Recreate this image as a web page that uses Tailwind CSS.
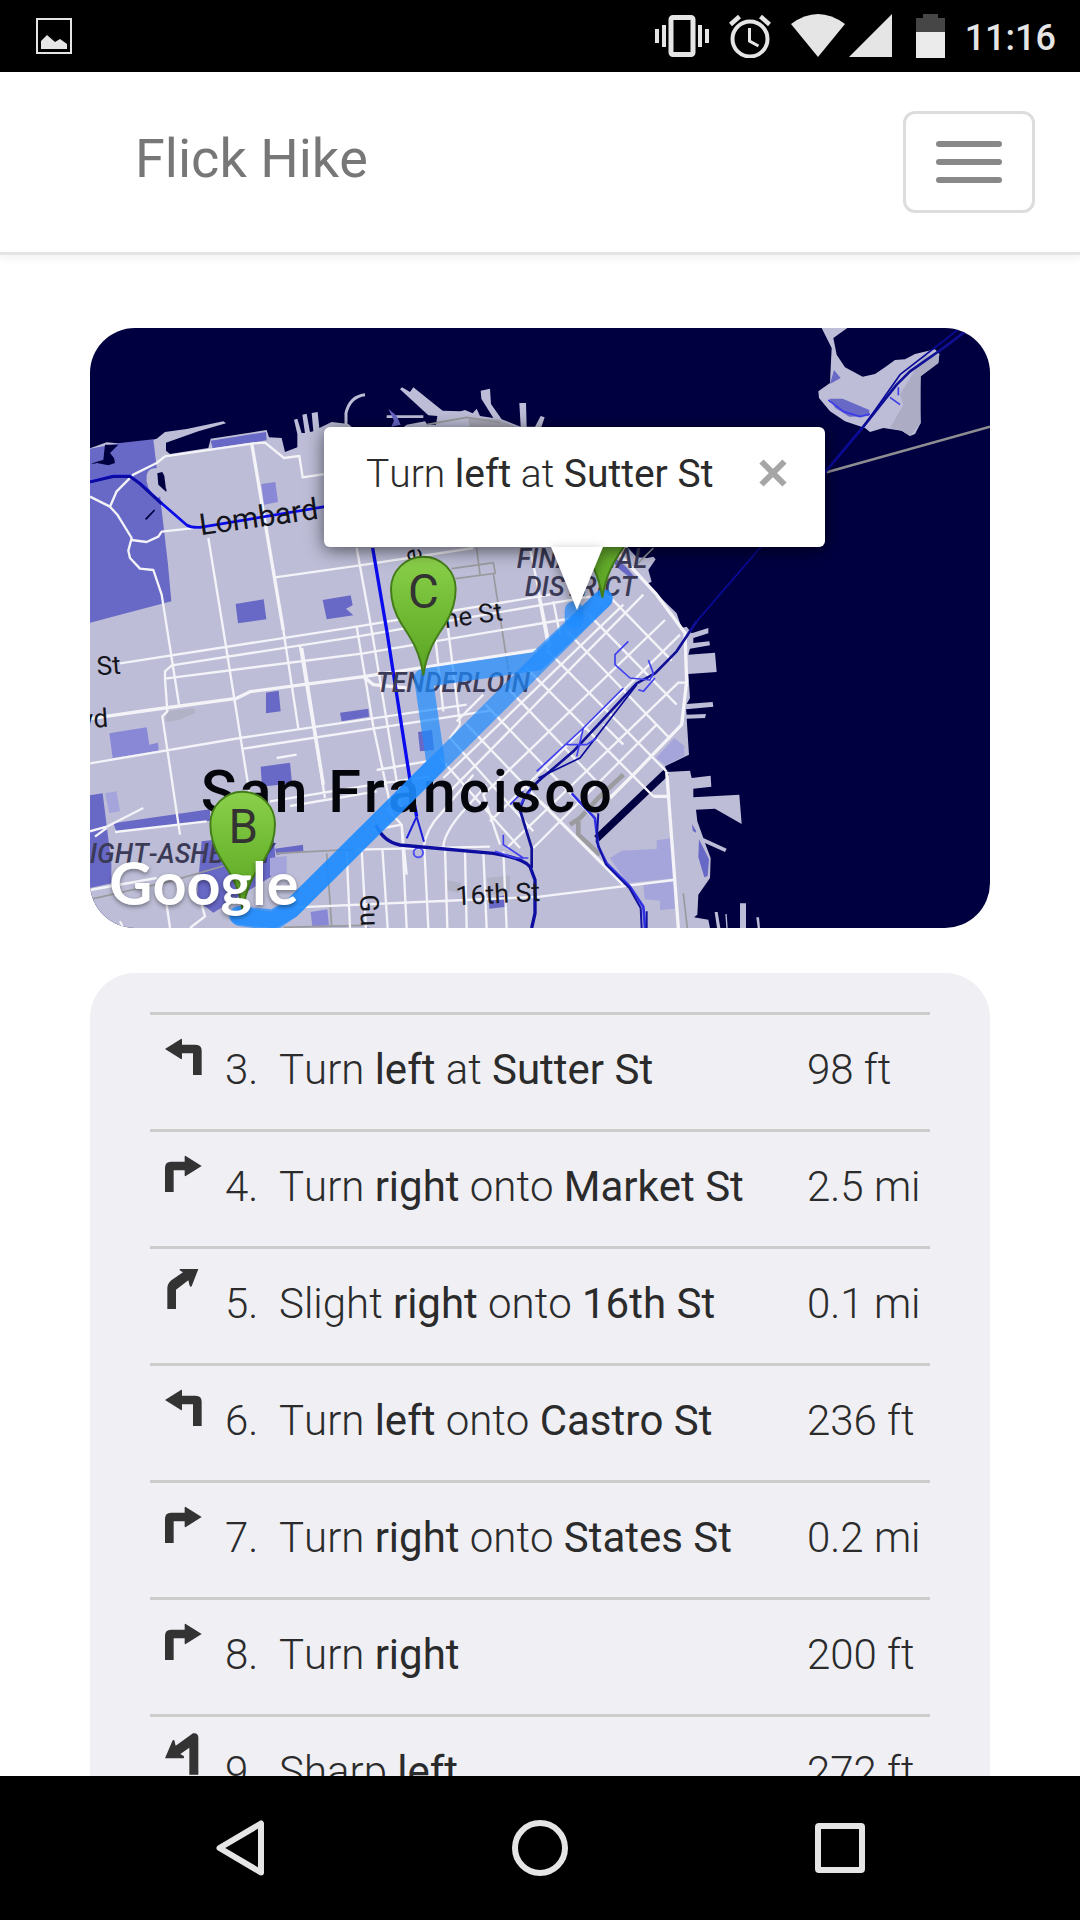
<!DOCTYPE html>
<html lang="en">
<head>
<meta charset="utf-8">
<meta name="viewport" content="width=device-width, initial-scale=1">
<title>Flick Hike</title>
<script src="https://cdn.jsdelivr.net/npm/@tailwindcss/browser@4"></script>
</head>
<body class="flex h-screen flex-col overflow-hidden bg-white font-[Roboto,sans-serif] text-[#2b2b2b] [font-kerning:none]">

<!-- Status bar -->
<div class="flex h-[72px] shrink-0 items-center justify-between bg-black pr-6 pl-9">
  <svg class="h-9 w-9" viewBox="0 0 36 36" role="img" aria-label="Screenshot saved"><rect x="1" y="1" width="34" height="34" fill="none" stroke="#e5e5e5" stroke-width="2"/><path d="M5 31V23l6-6 8 7 5-3 7 5v5z" fill="#e5e5e5"/></svg>
  <div class="flex items-center text-[#e5e5e5]">
    <svg class="mr-5 h-11 w-[54px]" viewBox="0 0 54 44" fill="#e5e5e5" role="img" aria-label="Vibrate"><rect x="16" y="3.500" width="22" height="37" rx="2" fill="none" stroke="#e5e5e5" stroke-width="5"/><path d="M0 15h4v14H0zM7 11h4v22H7zM43 11h4v22h-4zM50 15h4v14h-4z"/></svg>
    <svg class="mr-5 h-11 w-[42px]" viewBox="0 0 42 44" fill="none" stroke="#e5e5e5" role="img" aria-label="Alarm"><circle cx="21" cy="25" r="17.500" stroke-width="4"/><path d="M20.500 14v13l9 5" stroke-width="3"/><path d="M1.500 10.500l9-8M40.500 10.500l-9-8" stroke-width="4.500"/></svg>
    <svg class="mr-1 h-11 w-[54px]" viewBox="0 0 54 44" fill="#e5e5e5" role="img" aria-label="Wi-Fi"><path d="M27 43L0 10Q27-10 54 10z"/></svg>
    <svg class="mr-6 h-11 w-[43px]" viewBox="0 0 43 44" fill="#e5e5e5" role="img" aria-label="Signal"><path d="M0 43L43 0v43z"/></svg>
    <svg class="mr-5 h-11 w-[29px]" viewBox="0 0 29 44" role="img" aria-label="Battery"><path d="M7 0h15v4h7v15H0V4h7z" fill="#464646"/><path d="M0 18h29v26H0z" fill="#ebebeb"/></svg>
    <time class="pt-1 text-4xl font-medium">11:16</time>
  </div>
</div>

<!-- App header -->
<header class="relative z-10 flex shrink-0 items-center justify-between border-b-[3px] border-[#e4e4e4] bg-white py-[39px] pr-[45px] pl-[135px] shadow-[0_3px_9px_rgba(0,0,0,0.06)]">
  <a href="#" class="pb-1.5 text-[54px] leading-[60px] text-[#777]">Flick Hike</a>
  <button type="button" aria-label="Menu" class="flex h-[102px] w-[132px] flex-col items-center justify-center gap-3 rounded-xl border-[3px] border-[#ddd]">
    <span class="h-1.5 w-[66px] rounded-sm bg-[#888]"></span>
    <span class="h-1.5 w-[66px] rounded-sm bg-[#888]"></span>
    <span class="h-1.5 w-[66px] rounded-sm bg-[#888]"></span>
  </button>
</header>

<main class="flex min-h-0 flex-1 flex-col gap-[45px] overflow-hidden px-[90px] pt-[73px]">

  <!-- Map -->
  <section aria-label="Route map" class="relative aspect-[3/2] w-full shrink-0 overflow-hidden rounded-[45px] bg-[#000041]">
    <svg class="block h-full w-full" viewBox="0 0 2700 1800" role="img" aria-label="Map of San Francisco">
      <defs>
        <linearGradient id="pin" x1="0" y1="0" x2="0" y2="1"><stop offset="0" stop-color="#8bd04b"/><stop offset=".5" stop-color="#6fb933"/><stop offset="1" stop-color="#5aa324"/></linearGradient>
        <path id="marker" d="M0 0C-12-78-38-112-66-155C-84-184-97-222-97-259A97 97 0 0 1 97-259C97-222 84-184 66-155C38-112 12-78 0 0Z" fill="url(#pin)" stroke="#447c1a" stroke-width="6"/>
      </defs>

      <!-- Land -->
      <g fill="#bdbdd7">
        <path d="M0 361L50 343 130 350 200 332 225 312 290 303 400 280 408 286 325 310 228 344 228 368 240 378 355 360 362 332 530 306 537 328 575 330 585 372 622 358 622 318 612 275 622 272 635 315 645 315 637 260 650 257 660 312 670 310 665 255 683 252 688 300 725 282 775 288 800 310H925L950 290 1005 280 1012 290 1038 290 1042 264 1015 262 930 184 936 178 960 192 970 178 1058 248 1112 250 1125 246 1148 256 1160 242 1170 264 1210 270 1174 212 1172 188 1200 182 1203 228 1235 274 1292 296 1288 225 1308 225 1310 296 1335 296 1352 264 1364 268 1350 310 1560 600 1640 688 1672 690 1690 686 1697 694 1675 726 1685 761 1670 768 1760 856 1775 900 1790 896 1805 916 1855 900 1855 916 1810 930 1810 945 1858 940 1860 952 1800 962 1795 980 1875 974 1880 1032 1795 1038 1800 1110 1790 1128 1868 1122 1870 1136 1788 1144 1790 1160 1848 1158 1845 1170 1790 1172 1797 1280 1725 1315 1730 1332 1800 1328 1805 1350 1862 1343 1864 1376 1810 1382 1810 1408 1948 1400 1955 1488 1875 1442 1818 1445 1822 1480 1840 1530 1910 1562 1905 1572 1845 1545 1862 1590 1860 1650 1825 1700 1822 1760 1812 1768 1855 1775 1860 1800H0Z"/>
        <path d="M2195 0L2225 60 2223 100 2220 165 2185 190 2187 210 2220 250 2265 280 2325 300 2340 312 2380 300 2435 308 2460 324 2475 318 2492 285 2488 215 2492 145 2545 105 2548 78 2535 64 2475 78 2445 94 2415 96 2385 118 2355 138 2318 146 2265 118 2240 80 2230 30 2272 0Z"/>
        <path d="M1950 1726h18v74h-18zM1874 1752h9l8 48h-10zM1906 1758h4l3 42h-4zM1999 1768h8l3 32h-7zM890 262h110v8H890z"/>
      </g>
      <path d="M768 290V255Q780 205 825 200" fill="none" stroke="#bdbdd7" stroke-width="9"/>
      <path d="M2492 145L2545 105 2548 78 2500 85 2430 200 2440 230 2400 300 2435 308 2460 324 2492 285Z" fill="#acacc4"/>
      <path d="M1135 270l90 4 70 30H1140z" fill="#a8a8b8"/>
      <path d="M1730 1332L1520 1532" stroke="#000041" stroke-width="22"/>
      <path d="M1600 1340L1525 1410 1470 1470 1440 1490M1465 1480V1520L1530 1580" fill="none" stroke="#9c9ca0" stroke-width="14"/>
      <g fill="#b2b2c6"><path d="M230 1150l80-10 8 14-50 22-42 6zM1065 1655l50 10-10 30-40-10zM1190 1650l70-8 0 50-60 10z"/></g>

      <!-- Parks -->
      <g fill="#6868c6">
        <path d="M0 362L90 345 190 334 212 520 234 710 244 820 0 884Z"/>
        <path d="M362 338l166-26 2 25-162 24zM437 828l84-14 8 60-85 12zM698 816l84-14 6 30-20 10 22 20-80 12zM528 1094l38-6 6 62-44 6zM750 1154l85-12 2 24-82 14zM512 1316l88-12 6 62-90 10zM984 1212l42-6 6 60-42 4zM0 1402l38-6 26 210 0 60-64 14zM70 1486l290-42v34L80 1512zM335 1540l215-24 10 120-130 80-60 38-50-38zM555 1562l84-12 1 20-80 10zM1196 1712l50-10 4 34-52 6zM442 870l80-12v8l-70 16zM895 242l25 22 12 26-28 6 8-18zM1558 676l50 40 25 30-12 4-42-34z"/>
        <path d="M2232 126l20 24-32 18zM2218 212l40 0 80 34 0 18-60 2-42-26zM1827 1534l30 60-4 50-10 4-18-60zM1806 1488l12 20v6l-10-6z"/>
      </g>
      <g fill="#8888d6"><path d="M514 468l42-6 8 60-42 8zM58 1216l112-18 8 52 26-6 2 24-138 22zM662 1752l50-8 5 48-50 4z"/></g>
      <g fill="#a5a5dc"><path d="M1698 1290l55-60 30 24v30l-58 28zM1560 1590l35-22 105-5v-26l42-6 10 120-140 14zM1660 1670l92-10 2 82-44 4v-28l-46-4zM45 1396l35-6 10 60-32 6zM540 1590l50-6v56l-50 4z"/></g>
      <path d="M0 408L40 395 45 350 85 350 60 375 72 390 75 405 55 412 20 405ZM195 440l15-10 12 12 8 48-30-22 2-14zM165 572l28-28 2 4-26 28z" fill="#000041"/>
      <path d="M170 460Q165 420 200 420 232 440 230 470L228 490 205 510Q175 495 170 460Z" fill="#bdbdd7"/>
      <path d="M202 436l15-4 6 12 6 48-24-22z" fill="#000041"/>

      <!-- Minor and rail lines -->
      <g fill="none" stroke="#9a9a9e" stroke-width="5">
        <path d="M1010 290L1130 268 1230 284M1160 660l10 80M1085 722l125-18 6 32-120 16M1210 736l45 290M560 1576L790 1564M0 1714L240 1660 400 1614M710 1576l15 220M1690 660l-50 50M580 1798l240-6M1780 1696l12 104"/>
        <path d="M2210 433L2700 296" stroke="#8e8e92" stroke-width="8"/>
      </g>

      <!-- Streets -->
      <g fill="none" stroke="#f3f3f8" stroke-width="7" stroke-linejoin="round">
        <path d="M0 506L60 536 82 560 125 630 115 668 120 690 150 722 190 726 215 800 268 1136M60 536L80 490 130 440 200 405 225 385 490 346 525 344 582 390 628 384 638 448 705 438M125 636L170 642 205 626 215 611 330 598M355 630L400 906 480 1406M555 748L810 712 1150 660M90 1006L800 896 1380 800M245 1012L800 926 1500 806M225 1052L820 976 1450 870M225 1052V1030L248 1010M225 1052L232 1150 217 1165 270 1520M0 1306L450 1230 1130 1130M460 1262L1200 1148M560 1290L620 1280M540 1420L850 1370 1020 1345M600 1434L860 1390M800 660L845 906 935 1450M800 896L850 1196 905 1450M630 956L705 1410M580 906L625 1202M1030 876L1060 1150M1065 830L1110 1190M1320 660L1370 906 1380 960M1345 800L1375 960M1390 820L1410 920M860 1326L1010 1300M880 1500L935 1490"/>
        <path d="M890 1440L935 1490 950 1640M800 1565L1200 1556M620 1738L1350 1706 1750 1656M770 1570L780 1800M815 1565L828 1800M877 1560L893 1800M935 1490L950 1800M1003 1560L1015 1800M1065 1560L1072 1800M1125 1570L1130 1800M1180 1570L1190 1800M1240 1570L1250 1800M1060 1560Q1060 1520 1110 1460L1190 1370M1000 1560Q1010 1500 1050 1460L1150 1340M0 1686L200 1650M90 1780L100 1800M230 1730L240 1800M300 1800L345 1765 335 1730M0 1510L50 1496 160 1440M75 1512L350 1480M15 1526L50 1500"/>
        <path d="M1547 794L1745 998M1487 850L1760 1130M1427 906L1740 1232M1367 962L1730 1331M1307 1018L1690 1405M1247 1074L1567 1410M1187 1130L1507 1466M1127 1186L1350 1420M1110 1190L1080 1230 1330 1510M1050 1290L1290 1560M1600 830L1060 1350M1660 800L1070 1400M1725 876L1180 1400 1230 1550M1770 920L1200 1480M1785 1064H1765L1250 1560M1700 1190L1330 1560M1540 1190l60 60M1180 1100L1100 1180"/>
        <path d="M0 1172L180 1146 440 1111 480 1091 820 1046 1340 966M820 1046L850 1070 950 1080" stroke-width="10"/>
        <path d="M485 346L580 906M635 960L700 1370M1580 670L1700 800 1785 915 1790 1060 1775 1190 1640 1330 1560 1410M1730 1331L1765 1800M1690 1405H1732M1350 1420L1600 1670" stroke-width="10"/>
      </g>

      <!-- Highways -->
      <g fill="none" stroke="#1c1cdc" stroke-width="8" stroke-linejoin="round">
        <path d="M0 462L70 444H120L150 466 220 530 290 591Q305 600 330 598L705 536" stroke="#0a0ae8"/>
        <path d="M0 462L70 446H120L150 468 215 528" stroke="#0b0ba0"/>
        <path d="M848 660L890 906 960 1356 980 1466" stroke="#0a0aee" stroke-width="10"/>
        <path d="M980 1466L950 1531M980 1466L1002 1541" stroke-width="6"/><circle cx="985" cy="1574" r="14" stroke="#5050f0" stroke-width="6"/>
        <path d="M858 1491Q880 1541 930 1551L1210 1576Q1300 1591 1320 1616L1335 1656V1756L1325 1800" stroke="#0d0da0" stroke-width="10"/>
        <path d="M1325 1620V1560L1290 1446Q1300 1390 1380 1330L1450 1270 1640 1066 1695 1036 1760 970 1820 880" stroke="#101096"/>
        <path d="M2205 433L2320 296 2420 170 2460 130 2560 60 2640 0" stroke="#101096"/>
        <path d="M1820 880L2205 433 2320 296 2430 140 2610 0M1345 1350L1470 1290 1640 1070" stroke="#0a0a98" stroke-width="5"/>
        <path d="M1340 1330L1480 1200 1600 1080M1430 1250h60l30-20M1460 1285l20-85M1615 940l-40 40V1010l45 40 60 6 10-20-15-40M1645 1085l15 5 35-40M1215 1570l60 20 40 0M1240 1520v30l60 40M1300 1390l-40 40M1290 1430l30-40" stroke="#4040ee" stroke-width="5"/>
        <path d="M1445 1396L1515 1471 1525 1556 1550 1606 1620 1676 1660 1736 1665 1800" stroke="#3030e6"/>
        <path d="M1525 1456L1520 1540 1548 1610 1618 1680 1652 1740 1655 1800M1670 1750V1800" stroke="#1212a0" stroke-width="6"/>
        <path d="M2215 216L2260 250 2310 266 2340 258M2400 208l30 22M2425 178v24" stroke="#3c3ce8" stroke-width="5"/>
      </g>

      <!-- Place and street names -->
      <g fill="#15151c" font-family="Roboto, sans-serif" font-size="82">
        <text transform="translate(332 622) rotate(-8)" font-size="90">Lombard</text>
        <text transform="translate(1240 876) rotate(-8)" text-anchor="end" font-size="78">Pine St</text>
        <text transform="translate(22 1042) rotate(-4)" font-size="78">St</text>
        <text transform="translate(56 1196) rotate(-4)" text-anchor="end" font-size="78">Blvd</text>
        <text transform="translate(1098 1732) rotate(-3)" font-size="80">16th St</text>
        <text transform="translate(810 1700) rotate(88)" font-size="78">Guerrero</text>
        <text transform="translate(997 700) rotate(-98)" font-size="78">e</text>
        <g fill="#3b3b58" font-style="italic" font-weight="500" font-size="80">
          <text x="1476" y="721" text-anchor="middle">FINANCIAL</text>
          <text x="1472" y="804" text-anchor="middle">DISTRICT</text>
          <text x="858" y="1093">TENDERLOIN</text>
          <text x="552" y="1604" text-anchor="end">HAIGHT-ASHBURY</text>
        </g>
        <text x="332" y="1453" fill="#05050c" font-weight="500" font-size="178" class="tracking-wider">San Francisco</text>
      </g>

      <!-- Route -->
      <g fill="none" stroke="#1e8cff" stroke-opacity=".7" stroke-width="56" stroke-linecap="round" stroke-linejoin="round">
        <path d="M1540 812L1040 1310 602 1744 550 1772 445 1762"/>
        <path d="M1540 812L1340 1000 1000 1050 1038 1310 602 1744 550 1780 450 1766"/>
        <path d="M1452 848V874"/>
      </g>

      <!-- Markers -->
      <use href="#marker" x="1537" y="809"/>
      <use href="#marker" x="1000" y="1042"/>
      <use href="#marker" x="458" y="1747"/>
      <g fill="#333" font-family="Roboto, sans-serif" font-size="142" text-anchor="middle">
        <text x="1000" y="840">C</text>
        <text x="460" y="1546">B</text>
      </g>
      <text x="58" y="1730" fill="#fff" font-family="Lato, sans-serif" font-weight="700" font-size="178" class="drop-shadow-[0_6px_6px_rgba(0,0,0,0.4)]">Google</text>
    </svg>

    <!-- Step callout -->
    <div class="absolute top-[16.5%] left-[26%] flex h-[120px] w-[501px] items-start justify-between rounded-md bg-white pt-4 pr-[38px] pl-[42px] shadow-[0_3px_18px_rgba(0,0,0,0.6)]">
      <p class="pt-px text-[39px] leading-[60px] font-light whitespace-nowrap">Turn <b class="font-normal">left</b> at <b class="font-normal">Sutter St</b></p>
      <button type="button" aria-label="Close" class="flex h-[60px] items-center"><svg class="h-7 w-7" viewBox="0 0 28 28" stroke="#a6a6a6" stroke-width="6"><path d="M2.500 2.500l23 23M25.500 2.500l-23 23"/></svg></button>
      <svg class="absolute top-full left-[227px] h-[63px] w-[52px] drop-shadow-[0_4px_6px_rgba(0,0,0,0.4)]" viewBox="0 0 52 63" aria-hidden="true"><path d="M0 0h52L26 63z" fill="#fff"/></svg>
    </div>
  </section>

  <!-- Directions -->
  <section aria-label="Directions" class="shrink-0 rounded-t-[45px] bg-[#efeff4] px-[60px] pt-[39px]">
    <svg class="hidden" aria-hidden="true">
      <symbol id="left" viewBox="0 0 144 144"><path d="M18 66L67 35Q69 35 69 38V53H110Q128 53 128 71V144H102V79H69V94Q69 97 67 97Z"/></symbol>
      <symbol id="right" viewBox="0 0 144 144"><path d="M128 66L79 35Q77 35 77 38V53H36Q18 53 18 71V144H44V79H77V94Q77 97 79 97Z"/></symbol>
      <symbol id="slight-right" viewBox="0 0 144 144"><path d="M25 144V82Q25 68 37 58L72 34 62 28Q61 24 65 24H118L98 76Q94 79 92 74L88 58 51 86V144Z"/></symbol>
      <symbol id="sharp-left" viewBox="0 0 144 144"><path d="M118 137V24Q116 10 102 13L50 50 46 34Q42 32 40 36L18 88H74Q77 84 74 81L64 75 91 56V137Z"/></symbol>
    </svg>
    <table class="w-full table-fixed text-[42px] leading-[60px] font-light">
      <colgroup><col class="w-[75px]"><col class="w-[54px]"><col><col class="w-[123px]"></colgroup>
      <tbody class="[&_b]:font-normal [&_svg]:mt-3 [&_svg]:ml-[9px] [&_svg]:size-12 [&_svg]:fill-[#333] [&_td]:h-[117px] [&_td]:border-t-[3px] [&_td]:border-[#ccc] [&_td]:align-top [&_td]:whitespace-nowrap [&_td:not(:first-child)]:pt-[25px]">
        <tr><td><svg role="img" aria-label="Left"><use href="#left"/></svg></td><td>3.</td><td>Turn <b>left</b> at <b>Sutter St</b></td><td>98 ft</td></tr>
        <tr><td><svg role="img" aria-label="Right"><use href="#right"/></svg></td><td>4.</td><td>Turn <b>right</b> onto <b>Market St</b></td><td>2.5 mi</td></tr>
        <tr><td><svg role="img" aria-label="Slight right"><use href="#slight-right"/></svg></td><td>5.</td><td>Slight <b>right</b> onto <b>16th St</b></td><td>0.1 mi</td></tr>
        <tr><td><svg role="img" aria-label="Left"><use href="#left"/></svg></td><td>6.</td><td>Turn <b>left</b> onto <b>Castro St</b></td><td>236 ft</td></tr>
        <tr><td><svg role="img" aria-label="Right"><use href="#right"/></svg></td><td>7.</td><td>Turn <b>right</b> onto <b>States St</b></td><td>0.2 mi</td></tr>
        <tr><td><svg role="img" aria-label="Right"><use href="#right"/></svg></td><td>8.</td><td>Turn <b>right</b></td><td>200 ft</td></tr>
        <tr><td><svg role="img" aria-label="Sharp left"><use href="#sharp-left"/></svg></td><td>9.</td><td>Sharp <b>left</b></td><td>272 ft</td></tr>
      </tbody>
    </table>
  </section>
</main>

<!-- System navigation -->
<nav aria-label="System" class="grid h-36 shrink-0 grid-cols-3 items-center justify-items-center bg-black px-[90px]">
  <button type="button" aria-label="Back"><svg class="h-[60px] w-[60px]" viewBox="0 0 60 60" fill="none" stroke="#e5e5e5" stroke-width="6" stroke-linejoin="round"><path d="M51 5.500V54.500L9.500 30z"/></svg></button>
  <button type="button" aria-label="Home"><svg class="h-[60px] w-[60px]" viewBox="0 0 60 60" fill="none" stroke="#e5e5e5" stroke-width="6"><circle cx="30" cy="30" r="25"/></svg></button>
  <button type="button" aria-label="Recent apps"><svg class="h-[60px] w-[60px]" viewBox="0 0 60 60" fill="none" stroke="#e5e5e5" stroke-width="6"><rect x="8" y="8" width="44" height="44" rx="1"/></svg></button>
</nav>
</body>
</html>
